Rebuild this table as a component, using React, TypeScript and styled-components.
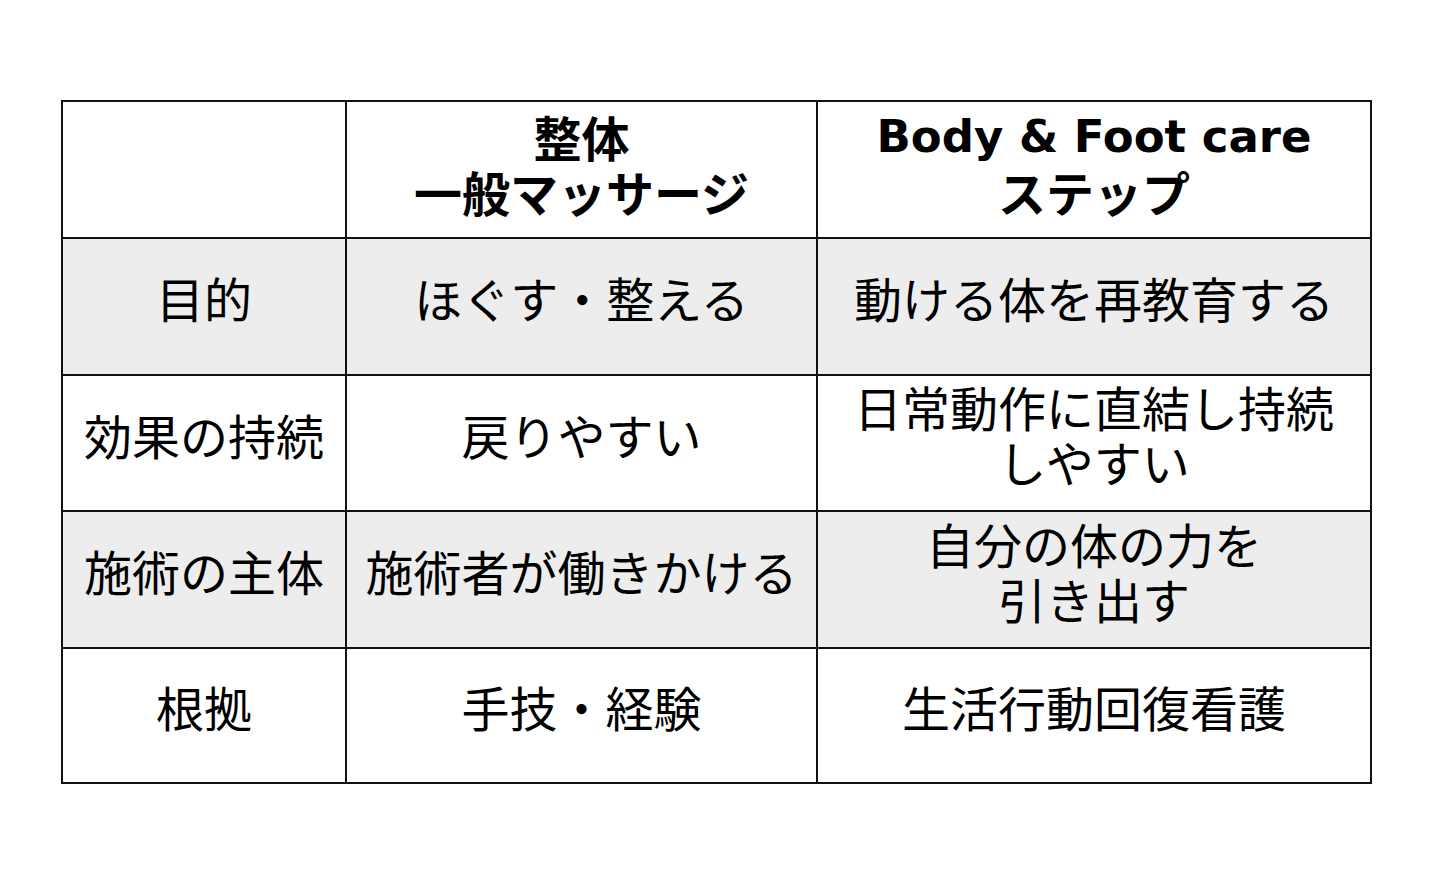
import React from "react";
import styled, { createGlobalStyle } from "styled-components";

const Global = createGlobalStyle`
  html, body { margin: 0; padding: 0; background: #ffffff; }
  body { font-family: "Noto Sans CJK JP", "Noto Sans", sans-serif; color: #000; }
`;

const Page = styled.div`
  width: 1430px;
  height: 896px;
  padding: 100px 0 0 61px;
  box-sizing: border-box;
`;

const Grid = styled.div`
  display: grid;
  grid-template-columns: 284px 471px 554px;
  grid-template-rows: 137px 137px 136px 137px 135px;
  border-top: 2px solid #111;
  border-left: 2px solid #111;
  width: max-content;
`;

const Cell = styled.div<{ $shaded?: boolean; $head?: boolean }>`
  box-sizing: border-box;
  border-right: 2px solid #111;
  border-bottom: 2px solid #111;
  background: ${(p) => (p.$shaded ? "#ededed" : "#ffffff")};
  display: flex;
  flex-direction: column;
  align-items: center;
  justify-content: center;
  text-align: center;
  font-size: 48px;
  line-height: 55px;
  font-weight: ${(p) => (p.$head ? 700 : 400)};
  padding-bottom: ${(p) => (p.$head ? 12 : 18)}px;
`;

const Line = styled.span<{ $latin?: boolean }>`
  display: block;
  white-space: nowrap;
  font-family: ${(p) =>
    p.$latin ? `"DejaVu Sans", "Noto Sans CJK JP", sans-serif` : "inherit"};
  font-size: ${(p) => (p.$latin ? "45px" : "inherit")};
`;

type Row = { cells: string[][]; head?: boolean; shaded?: boolean };

const rows: Row[] = [
  { cells: [[], ["整体", "一般マッサージ"], ["Body & Foot care", "ステップ"]], head: true },
  { cells: [["目的"], ["ほぐす・整える"], ["動ける体を再教育する"]], shaded: true },
  { cells: [["効果の持続"], ["戻りやすい"], ["日常動作に直結し持続", "しやすい"]] },
  { cells: [["施術の主体"], ["施術者が働きかける"], ["自分の体の力を", "引き出す"]], shaded: true },
  { cells: [["根拠"], ["手技・経験"], ["生活行動回復看護"]] },
];

export default function App() {
  return (
    <>
      <Global />
      <Page>
        <Grid>
          {rows.map((r, i) =>
            r.cells.map((lines, j) => (
              <Cell key={`${i}-${j}`} $head={r.head} $shaded={r.shaded}>
                {lines.map((t, k) => (
                  <Line key={k} $latin={/^[A-Za-z]/.test(t)}>
                    {t}
                  </Line>
                ))}
              </Cell>
            ))
          )}
        </Grid>
      </Page>
    </>
  );
}
